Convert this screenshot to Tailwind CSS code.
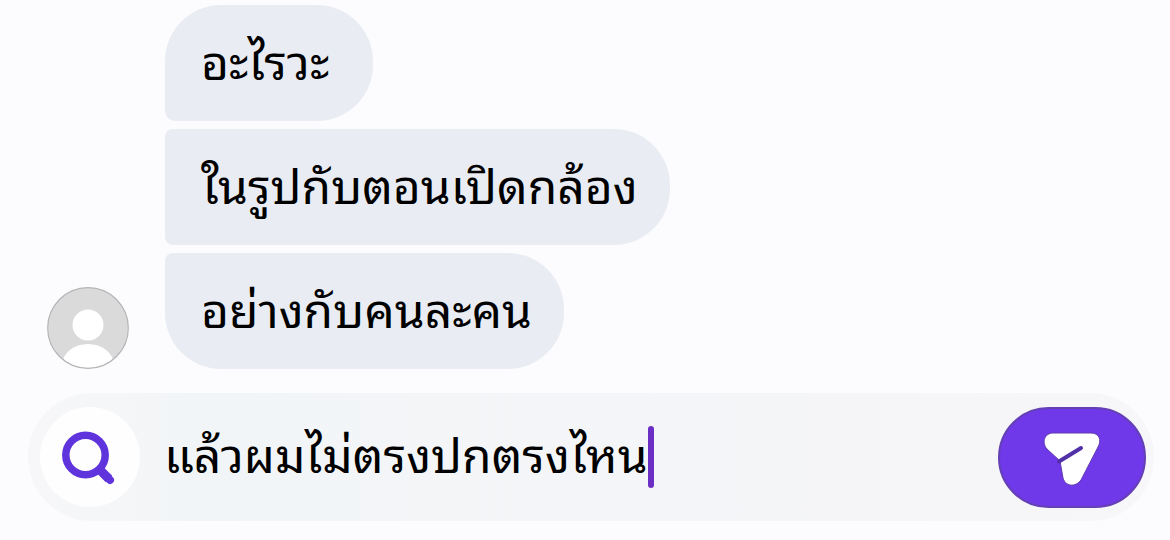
<!DOCTYPE html>
<html lang="th">
<head>
  <meta charset="UTF-8">
  <meta name="viewport" content="width=device-width, initial-scale=1">
  <title>Chat</title>
  <script src="https://cdn.jsdelivr.net/npm/@tailwindcss/browser@4"></script>
</head>
<body class="bg-[#fcfcfe] min-h-screen overflow-hidden text-black text-5xl leading-[68px] font-['Noto_Sans_Thai_Looped','Loma','Garuda','Waree','Noto_Sans','Liberation_Sans',sans-serif]">
  <!-- Conversation: avatar next to a group of messages -->
  <main class="flex items-end gap-9 pt-[5px] pl-[47px] pr-6">
    <!-- Default profile picture -->
    <svg class="size-[82px] shrink-0" viewBox="0 0 82 82" role="img" aria-label="Profile">
      <defs>
        <clipPath id="avatar-clip"><circle cx="41" cy="41" r="40"/></clipPath>
      </defs>
      <circle cx="41" cy="41" r="40" fill="#dadada"/>
      <g clip-path="url(#avatar-clip)" fill="#ffffff">
        <circle cx="41" cy="38" r="15.5"/>
        <ellipse cx="41" cy="78" rx="26" ry="21"/>
      </g>
      <circle cx="41" cy="41" r="40.3" fill="none" stroke="#b4b4b6" stroke-width="1.2"/>
    </svg>

    <ul class="flex flex-col items-start gap-2">
      <li class="bg-[#e9edf3] min-w-52 pl-9 pr-8 pt-5 pb-7 rounded-[56px] rounded-bl-[10px]">อะไรวะ</li>
      <li class="bg-[#e9edf3] pl-9 pr-8 pt-5 pb-7 rounded-r-[56px] rounded-l-[8px]">ในรูปกับตอนเปิดกล้อง</li>
      <li class="bg-[#e9edf3] pl-9 pr-8 pt-5 pb-7 rounded-[56px] rounded-tl-[8px]">อย่างกับคนละคน</li>
    </ul>
  </main>

  <!-- Message bar -->
  <form class="flex items-center mt-6 ml-7 mr-4 h-32 pl-3 pr-2 rounded-full bg-linear-to-r from-[#f7f7f9] from-0% via-[#f2f5f7] via-15% to-[#f7f6f9]">
    <button type="button" aria-label="Search" class="size-[100px] shrink-0 rounded-full bg-[#fefefe] flex items-center justify-center">
      <svg class="size-14" viewBox="0 0 56 56" fill="none" stroke="#6034dc">
        <circle cx="23.5" cy="26" r="19.7" stroke-width="7.5"/>
        <path d="M37 40L47 50" stroke-width="9"/>
        <path d="M46 49L48 51" stroke-width="8" stroke-linecap="round"/>
      </svg>
    </button>

    <div class="flex flex-1 items-center min-w-0 pl-6">
      <input type="text" aria-label="Message" value="แล้วผมไม่ตรงปกตรงไหน" class="field-sizing-content h-20 pb-3 max-w-full outline-none bg-transparent">
      <!-- Text cursor -->
      <span class="w-[6px] h-[62px] shrink-0 rounded-full bg-[#6c2fc6]"></span>
    </div>

    <button type="submit" aria-label="Send" class="w-[148px] h-[101px] shrink-0 rounded-full bg-[#6f38e8] border-2 border-[#6440b4] flex items-center justify-center">
      <svg class="size-15" viewBox="0 0 60 60">
        <path d="M11 6H49C57 6 60 13 56 20L40 51C36 60 24 61 21 51L18 34L5 22C-1 15 3 6 11 6Z" fill="#ffffff" stroke="#5f3bb0" stroke-width="1"/>
        <path d="M17 34.5L39 21" stroke="#5230a8" stroke-width="4" stroke-linecap="round"/>
      </svg>
    </button>
  </form>
</body>
</html>
